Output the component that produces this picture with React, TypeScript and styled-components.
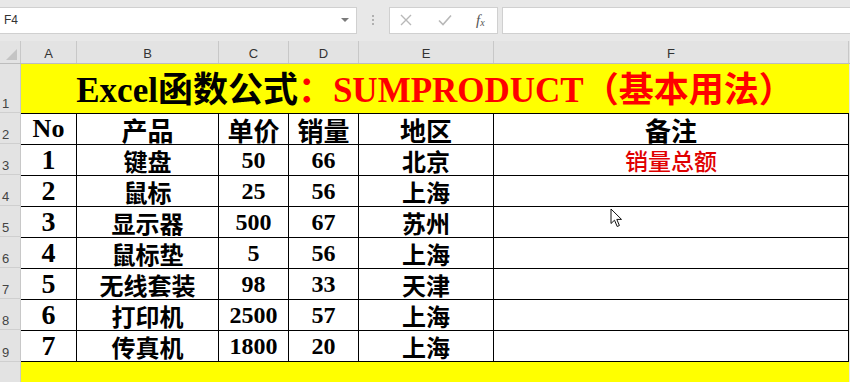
import styled, { createGlobalStyle } from "styled-components";

const GlobalStyle = createGlobalStyle`
  html, body {
    margin: 0;
    padding: 0;
    background: #e6e6e6;
  }
  body {
    width: 850px;
    height: 382px;
    overflow: hidden;
    font-family: "Liberation Sans", Arial, sans-serif;
  }
`;

const columns = [
    { key: "A", width: 56 },
    { key: "B", width: 142 },
    { key: "C", width: 70 },
    { key: "D", width: 70 },
    { key: "E", width: 135 },
    { key: "F", width: 355 },
];

const header = ["No", "产品", "单价", "销量", "地区", "备注"];

const rows = [
    ["1", "键盘", "50", "66", "北京", "销量总额"],
    ["2", "鼠标", "25", "56", "上海", ""],
    ["3", "显示器", "500", "67", "苏州", ""],
    ["4", "鼠标垫", "5", "56", "上海", ""],
    ["5", "无线套装", "98", "33", "天津", ""],
    ["6", "打印机", "2500", "57", "上海", ""],
    ["7", "传真机", "1800", "20", "上海", ""],
];

const App = () => {
    return (
        <Page>
            <GlobalStyle />
            <FormulaBar>
                <NameBox>
                    <span>F4</span>
                    <DropArrow />
                </NameBox>
                <Grip>
                    <i />
                    <i />
                    <i />
                </Grip>
                <ActionBox>
                    <ActionIcon>
                        <svg width="12" height="12" viewBox="0 0 12 12">
                            <path d="M1 1 L11 11 M11 1 L1 11" stroke="#b8b8b8" strokeWidth="1.4" />
                        </svg>
                    </ActionIcon>
                    <ActionIcon>
                        <svg width="14" height="12" viewBox="0 0 14 12">
                            <path d="M1 6.5 L5 10.5 L13 1.5" stroke="#b8b8b8" strokeWidth="1.6" fill="none" />
                        </svg>
                    </ActionIcon>
                    <FxLabel>
                        f<sub>x</sub>
                    </FxLabel>
                </ActionBox>
                <FormulaInput />
            </FormulaBar>

            <ColHeaderRow>
                <Corner>
                    <svg width="11" height="11" viewBox="0 0 11 11">
                        <path d="M11 0 L11 11 L0 11 Z" fill="#c4c4c4" />
                    </svg>
                </Corner>
                {columns.map((c) => (
                    <ColHead key={c.key} w={c.width}>
                        {c.key}
                    </ColHead>
                ))}
            </ColHeaderRow>

            <Row>
                <RowHead h={49}>1</RowHead>
                <TitleCell>
                    Excel函数公式<Red>：SUMPRODUCT（基本用法）</Red>
                </TitleCell>
            </Row>

            <Row>
                <RowHead h={31}>2</RowHead>
                {header.map((t, i) => (
                    <Cell key={i} w={columns[i].width} size={26}>
                        {t}
                    </Cell>
                ))}
            </Row>

            {rows.map((r, ri) => (
                <Row key={ri}>
                    <RowHead h={ri === rows.length - 1 ? 32 : 31}>{ri + 3}</RowHead>
                    {r.map((t, i) => (
                        <Cell
                            key={i}
                            w={columns[i].width}
                            size={i === 0 ? 28 : 24}
                            last={ri === rows.length - 1}
                        >
                            {i === 5 ? <Note>{t}</Note> : t}
                        </Cell>
                    ))}
                </Row>
            ))}

            <Row>
                <RowHead h={30} />
                <YellowFill />
            </Row>

            <Cursor width="13" height="20" viewBox="0 0 13 20">
                <path
                    d="M1 1 L1 15.5 L4.5 12.2 L7.2 18.5 L9.4 17.5 L6.8 11.4 L11.5 11.4 Z"
                    fill="#fff"
                    stroke="#111"
                    strokeWidth="1"
                    strokeLinejoin="miter"
                />
            </Cursor>
        </Page>
    );
};

const Page = styled.div`
    position: relative;
    width: 850px;
    height: 382px;
    overflow: hidden;
    background: #e6e6e6;
`;

const FormulaBar = styled.div`
    display: flex;
    align-items: center;
    height: 41px;
    box-sizing: border-box;
    background: #e8e8e8;
`;

const NameBox = styled.div`
    width: 357px;
    height: 27px;
    margin-top: -1px;
    box-sizing: border-box;
    background: #fff;
    border: 1px solid #d0d0d0;
    border-left: none;
    display: flex;
    align-items: center;
    justify-content: space-between;
    padding: 0 7px 0 4px;
    font-size: 12px;
    color: #333;
`;

const DropArrow = styled.span`
    width: 0;
    height: 0;
    border-left: 4px solid transparent;
    border-right: 4px solid transparent;
    border-top: 4px solid #7a7a7a;
`;

const Grip = styled.div`
    width: 32px;
    display: flex;
    flex-direction: column;
    align-items: center;
    gap: 2px;
    margin-top: -1px;
    & > i {
        width: 2px;
        height: 2px;
        background: #b0b0b0;
    }
`;

const ActionBox = styled.div`
    width: 109px;
    height: 27px;
    margin-top: -1px;
    box-sizing: border-box;
    background: #fff;
    border: 1px solid #d0d0d0;
    display: flex;
    align-items: center;
    padding-left: 10px;
`;

const ActionIcon = styled.span`
    width: 38px;
    display: flex;
    align-items: center;
`;

const FxLabel = styled.span`
    font-family: "Liberation Serif", serif;
    font-style: italic;
    font-size: 15px;
    color: #555;
    & > sub {
        font-size: 10px;
        vertical-align: -1px;
    }
`;

const FormulaInput = styled.div`
    flex: 1;
    height: 27px;
    margin-top: -1px;
    margin-left: 4px;
    box-sizing: border-box;
    background: #fff;
    border: 1px solid #d0d0d0;
    border-right: none;
`;

const ColHeaderRow = styled.div`
    display: flex;
    height: 22px;
    background: #e3e3e3;
    border-bottom: 1px solid #bdbdbd;
`;

const Corner = styled.div`
    width: 21px;
    box-sizing: border-box;
    border-right: 1px solid #c8c8c8;
    display: flex;
    align-items: flex-end;
    justify-content: flex-end;
    padding: 0 3px 3px 0;
`;

const ColHead = styled.div<{ w: number }>`
    width: ${({ w }) => w}px;
    box-sizing: border-box;
    border-right: 1px solid #c8c8c8;
    display: flex;
    align-items: center;
    justify-content: center;
    padding-top: 2px;
    font-size: 13px;
    color: #333;
`;

const Row = styled.div`
    display: flex;
`;

const RowHead = styled.div<{ h: number }>`
    width: 21px;
    height: ${({ h }) => h}px;
    flex-shrink: 0;
    box-sizing: border-box;
    background: #e3e3e3;
    border-right: 1px solid #c8c8c8;
    border-bottom: 1px solid #cfcfcf;
    display: flex;
    align-items: flex-end;
    padding: 0 0 0 2px;
    font-size: 13px;
    line-height: 16px;
    color: #444;
`;

const TitleCell = styled.div`
    width: 828px;
    height: 49px;
    background: #ffff00;
    display: flex;
    align-items: center;
    justify-content: center;
    padding-bottom: 4px;
    box-sizing: border-box;
    font-family: "Liberation Serif", "Noto Sans CJK SC", serif;
    font-weight: 700;
    font-size: 35px;
    color: #000;
    white-space: nowrap;
`;

const Red = styled.span`
    color: #f00;
`;

const Cell = styled.div<{ w: number; size: number; last?: boolean }>`
    width: ${({ w }) => w}px;
    height: ${({ last }) => (last ? 32 : 31)}px;
    box-sizing: border-box;
    background: #fff;
    border-top: 1px solid #000;
    border-right: 1px solid #000;
    border-bottom: ${({ last }) => (last ? "1px solid #000" : "none")};
    display: flex;
    align-items: center;
    justify-content: center;
    font-family: "Liberation Serif", "Noto Sans CJK SC", serif;
    font-weight: 700;
    font-size: ${({ size }) => size}px;
    color: #000;
    white-space: nowrap;
`;

const Note = styled.span`
    font-weight: 500;
    font-size: 23px;
    color: #e00000;
`;

const YellowFill = styled.div`
    width: 828px;
    height: 30px;
    background: #ffff00;
`;

const Cursor = styled.svg`
    position: absolute;
    left: 610px;
    top: 208px;
`;

export default App;
